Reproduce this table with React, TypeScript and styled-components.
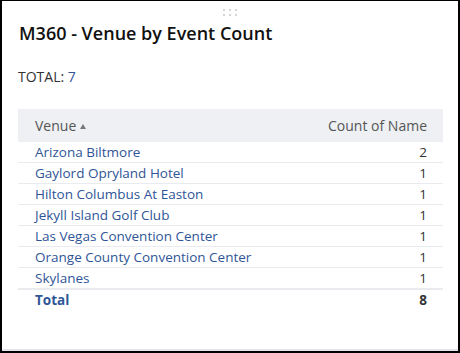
import React from 'react';
import styled, { createGlobalStyle } from 'styled-components';

const GlobalStyle = createGlobalStyle`
  html, body {
    margin: 0;
    padding: 0;
    background: #000;
  }
  body {
    font-family: 'Open Sans', 'Liberation Sans', sans-serif;
    width: 460px;
    height: 353px;
    overflow: hidden;
  }
`;

const Card = styled.div`
  position: relative;
  box-sizing: border-box;
  margin: 1px 2px 0 2px;
  width: 456px;
  height: 350px;
  background: #fff;
  border-bottom: 2px solid #e4e6eb;
  padding: 20px 15px 0 16px;
`;

const Handle = styled.div`
  position: absolute;
  top: 8px;
  left: 221px;
  display: grid;
  grid-template-columns: repeat(3, 3px);
  gap: 3px 3px;
  span {
    width: 2px;
    height: 2px;
    background: #d6d6d6;
  }
`;

const Title = styled.h1`
  margin: 0 0 0 1px;
  font-size: 18px;
  font-weight: 600;
  color: #111;
  line-height: 24px;
`;

const Summary = styled.div`
  margin-top: 22px;
  font-size: 14px;
  color: #333;
  line-height: 20px;
  b {
    font-weight: 400;
    color: #2f5597;
  }
`;

const Table = styled.table`
  margin-top: 22px;
  width: 425px;
  border-collapse: collapse;
  font-size: 14px;
`;

const HeadCell = styled.th<{ $right?: boolean }>`
  background: #eef0f3;
  color: #555;
  font-weight: 400;
  height: 33px;
  padding: 0 16px 0 17px;
  text-align: ${p => (p.$right ? 'right' : 'left')};
  white-space: nowrap;
`;

const Caret = styled.span`
  display: inline-block;
  margin-left: 4px;
  vertical-align: 2px;
  width: 0;
  height: 0;
  border-left: 3px solid transparent;
  border-right: 3px solid transparent;
  border-bottom: 5px solid #777;
`;

const Row = styled.tr<{ $total?: boolean }>`
  td {
    height: 20px;
    padding: 0 16px 0 17px;
    line-height: 20px;
    font-size: 13.5px;
    border-top: ${p => (p.$total ? '2px solid #e9ebef' : '1px solid #e9ebef')};
    font-weight: ${p => (p.$total ? 700 : 400)};
  }
  &:first-child td {
    border-top: none;
  }
`;

const Name = styled.td`
  color: #2f5597;
  text-align: left;
`;

const Count = styled.td`
  color: #333;
  text-align: right;
`;

const rows: [string, number][] = [
  ['Arizona Biltmore', 2],
  ['Gaylord Opryland Hotel', 1],
  ['Hilton Columbus At Easton', 1],
  ['Jekyll Island Golf Club', 1],
  ['Las Vegas Convention Center', 1],
  ['Orange County Convention Center', 1],
  ['Skylanes', 1],
];

const App: React.FC = () => (
  <>
    <GlobalStyle />
    <Card>
      <Handle>
        {Array.from({ length: 6 }).map((_, i) => (
          <span key={i} />
        ))}
      </Handle>
      <Title>M360 - Venue by Event Count</Title>
      <Summary>
        TOTAL: <b>7</b>
      </Summary>
      <Table>
        <thead>
          <tr>
            <HeadCell>
              Venue
              <Caret />
            </HeadCell>
            <HeadCell $right>Count of Name</HeadCell>
          </tr>
        </thead>
        <tbody>
          {rows.map(([name, count]) => (
            <Row key={name}>
              <Name>{name}</Name>
              <Count>{count}</Count>
            </Row>
          ))}
          <Row $total>
            <Name>Total</Name>
            <Count>8</Count>
          </Row>
        </tbody>
      </Table>
    </Card>
  </>
);

export default App;
